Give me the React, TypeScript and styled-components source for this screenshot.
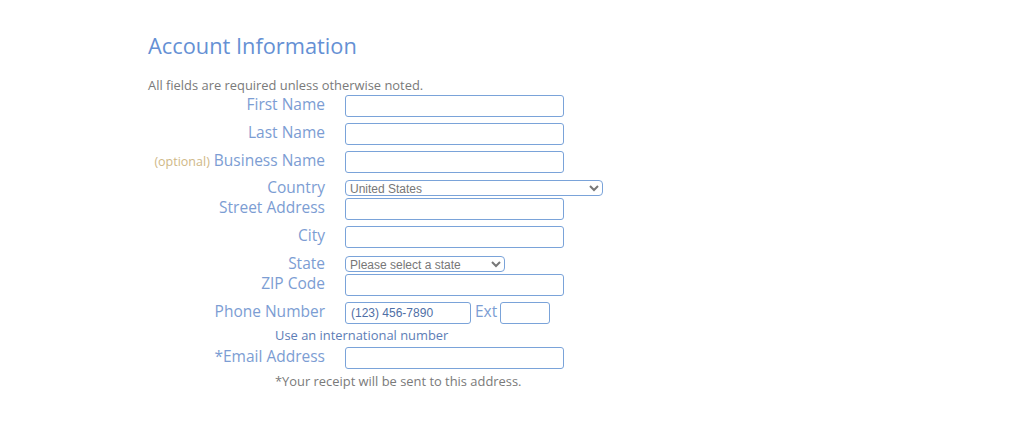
import React from "react";
import styled, { createGlobalStyle } from "styled-components";

const Global = createGlobalStyle`
  html, body {
    margin: 0;
    padding: 0;
    background: #ffffff;
  }
  body {
    font-family: "Open Sans", "DejaVu Sans", sans-serif;
  }
`;

const Page = styled.div`
  width: 1024px;
  height: 428px;
  padding: 31px 0 0 148px;
  box-sizing: border-box;
`;

const Title = styled.h1`
  margin: 0;
  font-size: 21.8px;
  font-weight: 400;
  line-height: 30px;
  color: #6590d4;
`;

const Intro = styled.p`
  margin: 16px 0 0;
  font-size: 12.9px;
  line-height: 16px;
  color: #7a7a7a;
`;

const Form = styled.form`
  display: flex;
  flex-direction: column;
  margin-top: 2px;
`;

const Row = styled.div<{ $h: number }>`
  display: flex;
  align-items: flex-start;
  height: ${(p) => p.$h}px;
`;

const Label = styled.label<{ $tight?: boolean }>`
  width: 177px;
  margin-right: 20px;
  text-align: right;
  font-size: 15.5px;
  line-height: ${(p) => (p.$tight ? "14px" : "18px")};
  color: #7c9dd3;
  white-space: nowrap;
`;

const Optional = styled.span`
  font-size: 12.5px;
  color: #cfb887;
  margin-right: 4px;
`;

const TextInput = styled.input<{ $w?: number }>`
  box-sizing: border-box;
  width: ${(p) => p.$w ?? 219}px;
  height: 22px;
  margin: 0;
  padding: 0 5px;
  border: 1px solid #7aa3d9;
  border-radius: 3px;
  background: #fff;
  font-family: "Liberation Sans", Arial, sans-serif;
  font-size: 12px;
  color: #4f6fa6;
  outline: none;
  &::placeholder {
    color: #4f6fa6;
  }
`;

const Select = styled.select<{ $w: number }>`
  box-sizing: border-box;
  width: ${(p) => p.$w}px;
  height: 16px;
  margin: 0;
  padding: 0;
  border: 1px solid #7aa3d9;
  border-radius: 4px;
  background: #fff;
  font-family: "Liberation Sans", Arial, sans-serif;
  font-size: 12px;
  font-weight: 400;
  color: #777777;
  outline: none;
`;

const Ext = styled.span`
  margin: 0 3px 0 4px;
  font-size: 15.5px;
  line-height: 18px;
  color: #7c9dd3;
`;

const Note = styled.div<{ $tone: "blue" | "gray" }>`
  padding-left: 127px;
  font-size: 12.9px;
  line-height: ${(p) => (p.$tone === "blue" ? "16px" : "20px")};
  padding-bottom: ${(p) => (p.$tone === "blue" ? "4px" : "0")};
  color: ${(p) => (p.$tone === "blue" ? "#5d7db6" : "#7a7a7a")};
`;

type Field = {
  label: string;
  optional?: boolean;
  kind: "text" | "select";
  h: number;
  width?: number;
  value?: string;
};

const fields: Field[] = [
  { label: "First Name", kind: "text", h: 28 },
  { label: "Last Name", kind: "text", h: 28 },
  { label: "Business Name", optional: true, kind: "text", h: 29 },
  { label: "Country", kind: "select", h: 18, width: 258, value: "United States" },
  { label: "Street Address", kind: "text", h: 28 },
  { label: "City", kind: "text", h: 30 },
  { label: "State", kind: "select", h: 18, width: 160, value: "Please select a state" },
  { label: "ZIP Code", kind: "text", h: 28 },
];

export default function App() {
  return (
    <Page>
      <Global />
      <Title>Account Information</Title>
      <Intro>All fields are required unless otherwise noted.</Intro>
      <Form>
        {fields.map((f) => (
          <Row key={f.label} $h={f.h}>
            <Label $tight={f.kind === "select"}>
              {f.optional && <Optional>(optional)</Optional>}
              {f.label}
            </Label>
            {f.kind === "text" ? (
              <TextInput type="text" />
            ) : (
              <Select $w={f.width!} defaultValue={f.value}>
                <option>{f.value}</option>
              </Select>
            )}
          </Row>
        ))}
        <Row $h={25}>
          <Label>Phone Number</Label>
          <TextInput $w={126} type="tel" placeholder="(123) 456-7890" />
          <Ext>Ext</Ext>
          <TextInput $w={50} type="text" />
        </Row>
        <Note $tone="blue">Use an international number</Note>
        <Row $h={24}>
          <Label>*Email Address</Label>
          <TextInput type="email" />
        </Row>
        <Note $tone="gray">*Your receipt will be sent to this address.</Note>
      </Form>
    </Page>
  );
}
